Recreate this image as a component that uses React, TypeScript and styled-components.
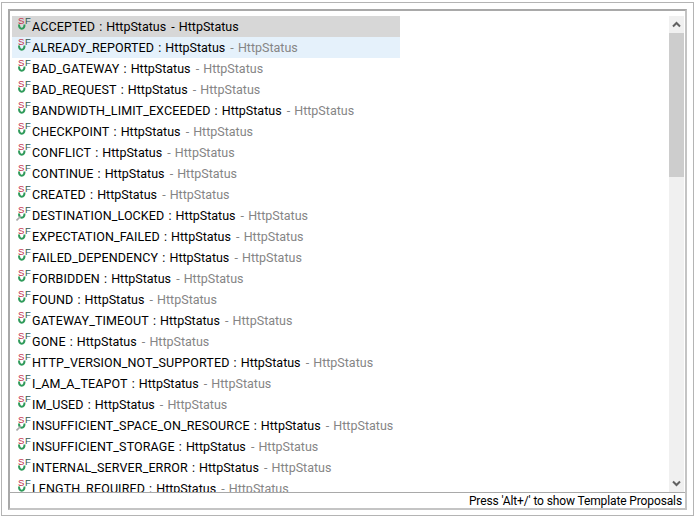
import React from "react";
import styled, { createGlobalStyle } from "styled-components";

const GlobalStyle = createGlobalStyle`
  html, body {
    margin: 0;
    padding: 0;
    background: #ffffff;
  }
`;

const Window = styled.div`
  box-sizing: border-box;
  width: 693px;
  height: 514px;
  margin: 2px 0 0 1px;
  padding: 6px;
  border: 1px solid #b4b4b4;
  font-family: Roboto, "Liberation Sans", sans-serif;
  font-size: 12.5px;
`;

const Panel = styled.div`
  box-sizing: border-box;
  width: 679px;
  height: 501px;
  display: flex;
  flex-direction: column;
  border-top: 2px solid #a9a9a9;
  border-left: 2px solid #a9a9a9;
  border-right: 2px solid #c4c4c4;
  border-bottom: 2px solid #c4c4c4;
`;

const Body = styled.div`
  flex: 1;
  min-height: 0;
  display: flex;
  justify-content: space-between;
  padding: 5px 1px 0 2px;
`;

const List = styled.ul`
  list-style: none;
  margin: 0;
  padding: 0;
  width: 388px;
  overflow: hidden;
`;

const Row = styled.li<{ $state?: "selected" | "hover" }>`
  height: 21px;
  display: flex;
  align-items: center;
  padding-left: 4px;
  white-space: nowrap;
  color: #000000;
  background: ${(p) =>
    p.$state === "selected" ? "#d7d7d7" : p.$state === "hover" ? "#e5f1fb" : "transparent"};
`;

const Icon = styled.svg`
  flex: none;
  width: 16px;
  height: 16px;
  margin: -5px 0 0 0;
`;

const Label = styled.span`
  word-spacing: 1px;
`;

const Name = styled.span`
  letter-spacing: 0.12px;
`;

const Qualifier = styled.span<{ $selected?: boolean }>`
  margin-left: 1px;
  color: ${(p) => (p.$selected ? "#000000" : "#858585")};
`;

const Scrollbar = styled.div`
  flex: none;
  width: 15px;
  display: flex;
  flex-direction: column;
  background: #f0f0f0;
`;

const ArrowButton = styled.div`
  flex: none;
  height: 17px;
  display: flex;
  align-items: center;
  justify-content: center;
`;

const Track = styled.div`
  flex: 1;
`;

const Thumb = styled.div`
  height: 144px;
  background: #cdcdcd;
`;

const Footer = styled.div`
  flex: none;
  height: 15px;
  border-top: 1px solid #a9a9a9;
  display: flex;
  align-items: center;
  justify-content: flex-end;
  padding-right: 3px;
  color: #000000;
  font-size: 12px;
  letter-spacing: -0.12px;
`;

const rows: { name: string; deprecated?: boolean }[] = [
  { name: "ACCEPTED" },
  { name: "ALREADY_REPORTED" },
  { name: "BAD_GATEWAY" },
  { name: "BAD_REQUEST" },
  { name: "BANDWIDTH_LIMIT_EXCEEDED" },
  { name: "CHECKPOINT" },
  { name: "CONFLICT" },
  { name: "CONTINUE" },
  { name: "CREATED" },
  { name: "DESTINATION_LOCKED", deprecated: true },
  { name: "EXPECTATION_FAILED" },
  { name: "FAILED_DEPENDENCY" },
  { name: "FORBIDDEN" },
  { name: "FOUND" },
  { name: "GATEWAY_TIMEOUT" },
  { name: "GONE" },
  { name: "HTTP_VERSION_NOT_SUPPORTED" },
  { name: "I_AM_A_TEAPOT" },
  { name: "IM_USED" },
  { name: "INSUFFICIENT_SPACE_ON_RESOURCE", deprecated: true },
  { name: "INSUFFICIENT_STORAGE" },
  { name: "INTERNAL_SERVER_ERROR" },
  { name: "LENGTH_REQUIRED" },
];

const FieldIcon = ({ deprecated }: { deprecated?: boolean }) => (
  <Icon viewBox="0 0 16 16">
    <path d="M3 8.5 C3 14 8.5 14 8.5 8.5" fill="none" stroke="#2f9a5a" strokeWidth="2" />
    <text x="2" y="8" fontSize="9.5" fontFamily="Liberation Sans" fill="#c0304a">S</text>
    <text x="9" y="8" fontSize="9.5" fontFamily="Liberation Sans" fill="#2f5a50">F</text>
    {deprecated && <path d="M0.5 15.5 L5 11" stroke="#a8a8a8" strokeWidth="1.6" />}
  </Icon>
);

const Chevron = ({ up }: { up?: boolean }) => (
  <svg width="9" height="7" viewBox="0 0 9 7">
    <path
      d={up ? "M1 5.5 L4.5 2 L8 5.5" : "M1 1.5 L4.5 5 L8 1.5"}
      fill="none"
      stroke="#606060"
      strokeWidth="2"
    />
  </svg>
);

const App = () => {
  return (
    <>
      <GlobalStyle />
      <Window>
        <Panel>
          <Body>
            <List>
              {rows.map((row, i) => (
                <Row key={row.name} $state={i === 0 ? "selected" : i === 1 ? "hover" : undefined}>
                  <FieldIcon deprecated={row.deprecated} />
                  <Label>
                    <Name>{row.name}</Name> : HttpStatus{" "}
                    <Qualifier $selected={i === 0}>- HttpStatus</Qualifier>
                  </Label>
                </Row>
              ))}
            </List>
            <Scrollbar>
              <ArrowButton>
                <Chevron up />
              </ArrowButton>
              <Thumb />
              <Track />
              <ArrowButton>
                <Chevron />
              </ArrowButton>
            </Scrollbar>
          </Body>
          <Footer>Press 'Alt+/' to show Template Proposals</Footer>
        </Panel>
      </Window>
    </>
  );
};

export default App;
